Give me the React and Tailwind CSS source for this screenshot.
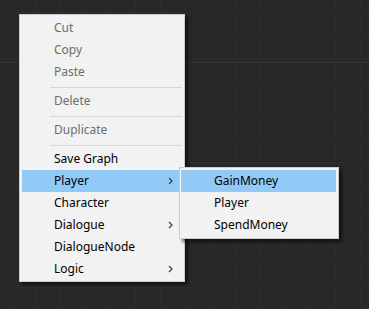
import React from 'react';

const Chevron = () => (
  <svg width="5" height="8" viewBox="0 0 5 8" className="shrink-0">
    <path d="M1 1 L4 4 L1 7" fill="none" stroke="#3c3c3c" strokeWidth="1.2" />
  </svg>
);

function Item({ label, disabled, active, sub, children }) {
  return (
    <div
      className={`relative flex h-[22px] items-center pl-[32px] pr-[9px] ${
        active ? 'bg-[#91c9f7]' : ''
      } ${disabled ? 'text-[#6d6d6d]' : 'text-black'}`}
    >
      <span className="flex-1">{label}</span>
      {sub && <Chevron />}
      {children}
    </div>
  );
}

const Separator = () => (
  <div className="pt-[4px] pb-[2px] pl-[28px]">
    <div className="h-px bg-[#d7d7d7]" />
  </div>
);

export default function App() {
  const players = ['GainMoney', 'Player', 'SpendMoney'];

  return (
    <div className="h-[309px] w-[369px] overflow-hidden bg-[#282828] bg-[linear-gradient(to_bottom,transparent_62px,#353535_62px,#353535_63px,transparent_63px),linear-gradient(to_right,#2d2d2d_1px,transparent_1px),linear-gradient(to_bottom,#2d2d2d_1px,transparent_1px)] bg-[length:100%_100%,25px_25px,25px_25px] bg-[position:0_0,10px_12px,10px_12px] pt-[14px] pl-[19px] font-['Noto_Sans',sans-serif] text-[12px] leading-none">
      {/* Main context menu */}
      <div className="w-[166px] border border-[#cccccc] bg-[#f2f2f2] px-[2px] pt-[2px] pb-px shadow-[3px_3px_3px_rgba(0,0,0,0.55)]">
        <Item label="Cut" disabled />
        <Item label="Copy" disabled />
        <Item label="Paste" disabled />
        <Separator />
        <Item label="Delete" disabled />
        <Separator />
        <Item label="Duplicate" disabled />
        <Separator />
        <Item label="Save Graph" />
        <Item label="Player" sub active>
          {/* Submenu */}
          <div className="absolute left-[157px] top-[-3px] z-10 w-[160px] border border-[#cccccc] bg-[#f2f2f2] p-[2px] pl-px shadow-[3px_3px_3px_rgba(0,0,0,0.55)]">
            {players.map((p, i) => (
              <div
                key={p}
                className={`flex h-[22px] items-center pl-[33px] text-black ${
                  i === 0 ? 'bg-[#91c9f7]' : ''
                }`}
              >
                {p}
              </div>
            ))}
          </div>
        </Item>
        <Item label="Character" />
        <Item label="Dialogue" sub />
        <Item label="DialogueNode" />
        <Item label="Logic" sub />
      </div>
    </div>
  );
}
